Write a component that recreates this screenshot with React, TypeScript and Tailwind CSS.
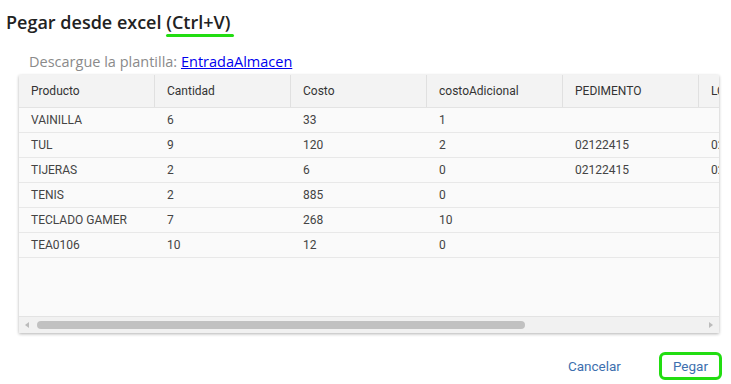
export default function App() {
  const columns = ["Producto", "Cantidad", "Costo", "costoAdicional", "PEDIMENTO", "LOTE"];
  const rows = [
    ["VAINILLA", "6", "33", "1", "", ""],
    ["TUL", "9", "120", "2", "02122415", "02122415"],
    ["TIJERAS", "2", "6", "0", "02122415", "02122415"],
    ["TENIS", "2", "885", "0", "", ""],
    ["TECLADO GAMER", "7", "268", "10", "", ""],
    ["TEA0106", "10", "12", "0", "", ""],
  ];

  return (
    <div className="h-[384px] w-[731px] bg-white font-['Open_Sans',sans-serif]">
      <h1 className="pl-[6px] pt-[9px] text-[18px] font-semibold leading-[26px] text-[#222]">
        Pegar desde excel{" "}
        <span className="relative">
          (Ctrl+V)
          <span className="absolute left-0 right-[-4px] top-[24px] h-[3px] rounded-full bg-[#22dd11]" />
        </span>
      </h1>

      <p className="mt-[18px] pl-[29px] text-[14.5px] leading-[18px] text-[#8a8a8a]">
        Descargue la plantilla:{" "}
        <a href="#" className="text-[#0000ee] underline">
          EntradaAlmacen
        </a>
      </p>

      {/* tabla con scroll horizontal, la ultima columna queda cortada */}
      <div className="ml-[19px] mt-[4px] h-[258px] w-[700px] overflow-hidden bg-[#fafafa] font-['Roboto',sans-serif] text-[12px] text-[#444] shadow-[0_1px_3px_rgba(0,0,0,0.3)]">
        <div className="flex h-[33px] w-[816px] border-b border-[#e3e3e3] bg-[#f3f3f3] text-[#333]">
          {columns.map((c) => (
            <div key={c} className="flex w-[136px] shrink-0 items-center border-r border-[#e0e0e0] pl-[12px]">
              {c}
            </div>
          ))}
        </div>
        {rows.map((r) => (
          <div key={r[0]} className="flex h-[25px] w-[816px] border-b border-[#e8e8e8]">
            {r.map((v, i) => (
              <div key={i} className="flex w-[136px] shrink-0 items-center pl-[12px]">
                {v}
              </div>
            ))}
          </div>
        ))}
        <div className="h-[58px]" />
        <div className="flex h-[17px] items-center border-t border-[#e3e3e3] bg-[#f1f1f1] px-[4px]">
          <svg width="8" height="8" viewBox="0 0 8 8" className="shrink-0">
            <path d="M6 1 L2 4 L6 7 Z" fill="#bbb" />
          </svg>
          <div className="ml-[6px] h-[8px] w-[488px] rounded-full bg-[#c1c1c1]" />
          <div className="flex-1" />
          <svg width="8" height="8" viewBox="0 0 8 8" className="shrink-0">
            <path d="M2 1 L6 4 L2 7 Z" fill="#bbb" />
          </svg>
        </div>
      </div>

      <div className="mt-[19px] flex items-center justify-end pr-[9px] font-['Roboto',sans-serif] text-[13.5px] text-[#3d6fae]">
        <button className="px-[8px] py-[4px]">Cancelar</button>
        <button className="ml-[30px] rounded-[6px] border-[3px] border-[#22dd11] px-[11px] py-[1px]">Pegar</button>
      </div>
    </div>
  );
}
